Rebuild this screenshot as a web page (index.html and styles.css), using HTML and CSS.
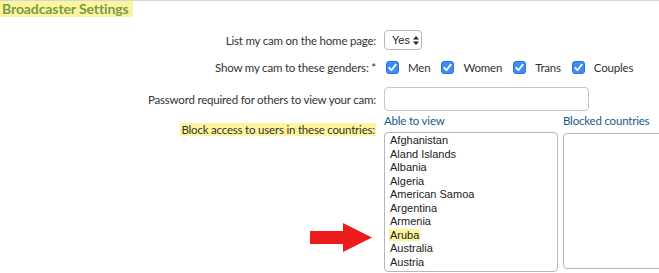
FILE: index.html
```html
<!DOCTYPE html>
<html>
<head>
<meta charset="utf-8">
<link rel="stylesheet" href="styles.css">
</head>
<body>
<div class="topline"></div>
<h1 class="title"><span class="hl">Broadcaster Settings</span></h1>

<div class="row r1">
  <label class="lbl">List my cam on the home page:</label>
  <div class="ctl">
    <span class="select">Yes<svg class="updown" width="6" height="9" viewBox="0 0 6 9"><path d="M3 0 L6 3.5 L0 3.5 Z M3 9 L6 5.5 L0 5.5 Z" fill="#222"/></svg></span>
  </div>
</div>

<div class="row r2">
  <label class="lbl">Show my cam to these genders: *</label>
  <div class="ctl checks">
    <span class="opt"><span class="cb"><svg width="13" height="13" viewBox="0 0 13 13"><path d="M3.2 6.8 L5.4 9.2 L9.8 3.6" fill="none" stroke="#fff" stroke-width="1.8" stroke-linecap="round" stroke-linejoin="round"/></svg></span>Men</span>
    <span class="opt"><span class="cb"><svg width="13" height="13" viewBox="0 0 13 13"><path d="M3.2 6.8 L5.4 9.2 L9.8 3.6" fill="none" stroke="#fff" stroke-width="1.8" stroke-linecap="round" stroke-linejoin="round"/></svg></span>Women</span>
    <span class="opt"><span class="cb"><svg width="13" height="13" viewBox="0 0 13 13"><path d="M3.2 6.8 L5.4 9.2 L9.8 3.6" fill="none" stroke="#fff" stroke-width="1.8" stroke-linecap="round" stroke-linejoin="round"/></svg></span>Trans</span>
    <span class="opt"><span class="cb"><svg width="13" height="13" viewBox="0 0 13 13"><path d="M3.2 6.8 L5.4 9.2 L9.8 3.6" fill="none" stroke="#fff" stroke-width="1.8" stroke-linecap="round" stroke-linejoin="round"/></svg></span>Couples</span>
  </div>
</div>

<div class="row r3">
  <label class="lbl">Password required for others to view your cam:</label>
  <div class="ctl"><span class="input"></span></div>
</div>

<div class="row r4">
  <label class="lbl"><span class="hl2">Block access to users in these countries:</span></label>
  <div class="ctl lists">
    <div class="col">
      <a class="head">Able to view</a>
      <div class="listbox lb1">
        <div class="item">Afghanistan</div>
        <div class="item">Aland Islands</div>
        <div class="item">Albania</div>
        <div class="item">Algeria</div>
        <div class="item">American Samoa</div>
        <div class="item">Argentina</div>
        <div class="item">Armenia</div>
        <div class="item"><span class="hl3">Aruba</span></div>
        <div class="item">Australia</div>
        <div class="item">Austria</div>
      </div>
    </div>
    <div class="col col2">
      <a class="head">Blocked countries</a>
      <div class="listbox lb2"></div>
    </div>
  </div>
</div>

<svg class="arrow" width="659" height="273" viewBox="0 0 659 273">
  <polygon points="310,231 343,231 343,223 372,237.5 343,252 343,244 310,244" fill="#ec1c1c"/>
</svg>
</body>
</html>
```

FILE: styles.css
```css
html, body {
  margin: 0;
  padding: 0;
}
body {
  width: 659px;
  height: 273px;
  overflow: hidden;
  position: relative;
  background: #fff;
  font-family: Lato, "Open Sans", sans-serif;
  font-size: 11.5px;
  letter-spacing: -0.2px;
  color: #333;
}
.topline {
  height: 1px;
  background: #d6d6d6;
}
.title {
  margin: 0;
  font-size: 14px;
  font-weight: bold;
  line-height: 16px;
  letter-spacing: -0.1px;
  color: #7a9a4c;
}
.title .hl {
  display: inline-block;
  background: #fcf59c;
  padding: 0 4px 0 2px;
}
.row {
  display: grid;
  grid-template-columns: 376px 1fr;
  column-gap: 8px;
  align-items: center;
}
.lbl {
  text-align: right;
  white-space: nowrap;
  line-height: 15px;
}
.r1 { margin-top: 13px; height: 20px; }
.r2 { margin-top: 7px; height: 20px; }
.r3 { margin-top: 10px; height: 24px; }
.r4 { margin-top: 3px; align-items: start; }
.r4 .lbl { margin-top: 8px; }
.hl2 {
  background: #fcf59c;
  padding: 0 1px;
}
.select {
  display: inline-flex;
  align-items: center;
  box-sizing: border-box;
  width: 38px;
  height: 20px;
  border: 1px solid #b9b9b9;
  border-radius: 4px;
  padding-left: 7px;
  font-family: "Liberation Sans", sans-serif;
  font-size: 11px;
  letter-spacing: 0;
  color: #222;
}
.updown {
  margin-left: 3px;
  flex: none;
}
.checks {
  display: flex;
  align-items: center;
  padding-left: 2px;
}
.opt {
  display: inline-flex;
  align-items: center;
  margin-right: 11px;
}
.cb {
  display: inline-block;
  width: 13px;
  height: 13px;
  box-sizing: border-box;
  background: #3b8cf6;
  border: 1px solid #2e74d8;
  border-radius: 3px;
  margin-right: 9px;
  position: relative;
}
.cb svg {
  position: absolute;
  left: -1px;
  top: -1px;
}
.input {
  display: block;
  box-sizing: border-box;
  width: 205px;
  height: 24px;
  border: 1px solid #c6c6c6;
  border-radius: 4px;
}
.lists {
  display: flex;
  gap: 5px;
}
.col {
  display: flex;
  flex-direction: column;
}
.head {
  color: #185a8c;
  line-height: 14px;
  margin-bottom: 4px;
}
.listbox {
  box-sizing: border-box;
  border: 1px solid #b8b8b8;
  border-radius: 4px;
  background: #fff;
}
.lb1 {
  width: 174px;
  height: 140px;
  padding: 1px 0 0 5px;
  font-family: "Liberation Sans", Arial, sans-serif;
  font-size: 11px;
  letter-spacing: 0;
  color: #222;
}
.lb2 {
  width: 110px;
  height: 136px;
  margin-top: 1px;
}
.item {
  height: 13.55px;
  line-height: 13.55px;
  white-space: nowrap;
}
.hl3 {
  background: #fcf59c;
  padding: 0 1px;
  margin-left: -1px;
}
.arrow {
  position: absolute;
  left: 0;
  top: 0;
  pointer-events: none;
}
```
